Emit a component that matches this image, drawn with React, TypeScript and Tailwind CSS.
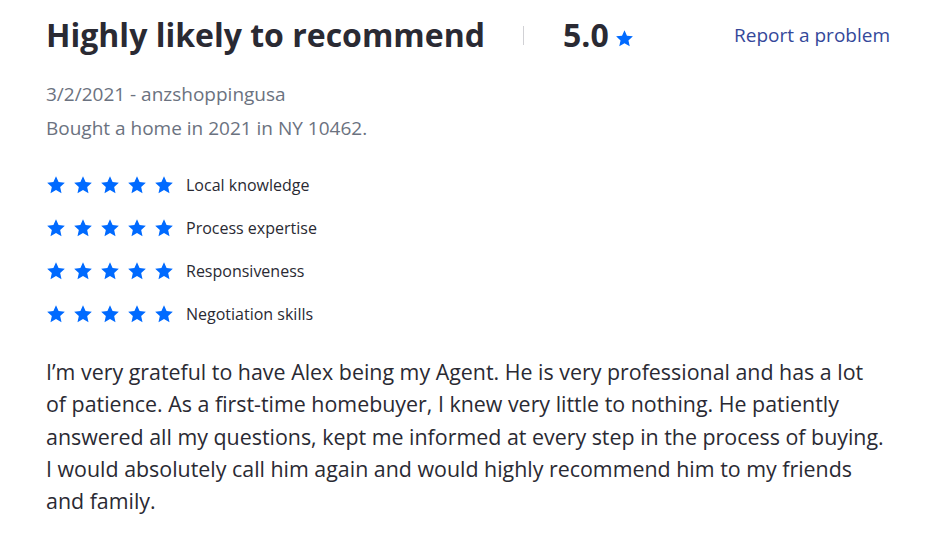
const categories = ['Local knowledge', 'Process expertise', 'Responsiveness', 'Negotiation skills'];

function Star({ className }: { className: string }) {
  return (
    <svg viewBox="0 0 24 24" className={className} aria-hidden="true">
      <path
        fill="#006aff"
        d="M12 1.6l3.1 6.9 7.5.8-5.6 5.1 1.6 7.4L12 18l-6.6 3.8L7 14.4 1.4 9.3l7.5-.8z"
      />
    </svg>
  );
}

export default function App() {
  return (
    <div className="min-h-screen bg-white font-['Open_Sans',sans-serif] text-[#2a2a33]">
      <div className="pl-[46px] pr-[52px] pt-[13px]">
        {/* Header */}
        <div className="flex items-start justify-between">
          <div className="flex items-center">
            <h2 className="text-[32px] font-bold leading-[44px] text-[#2a2a33]">Highly likely to recommend</h2>
            <span className="ml-[38px] h-[19px] w-px bg-[#d1d1d5]" />
            <div className="ml-[39px] flex items-end">
              <span className="text-[32px] font-bold leading-[44px]">5.0</span>
              <Star className="mb-[9px] ml-[6px] h-[19px] w-[19px]" />
            </div>
          </div>
          <a href="#" className="mt-[8px] text-[19px] leading-[28px] text-[#34489a]">
            Report a problem
          </a>
        </div>

        {/* Meta */}
        <div className="mt-[20px] text-[19px] leading-[34px] text-[#6b7280]">
          <p>3/2/2021 - anzshoppingusa</p>
          <p>Bought a home in 2021 in NY 10462.</p>
        </div>

        {/* Sub ratings */}
        <ul className="mt-[28px] flex flex-col gap-[19px]">
          {categories.map((c) => (
            <li key={c} className="flex items-center">
              <div className="flex gap-[7px]">
                {[0, 1, 2, 3, 4].map((i) => (
                  <Star key={i} className="h-[20px] w-[20px]" />
                ))}
              </div>
              <span className="ml-[12px] text-[16px] leading-[24px] text-[#2a2a33]">{c}</span>
            </li>
          ))}
        </ul>

        {/* Review body */}
        <p className="mt-[30px] max-w-[840px] text-[21.4px] leading-[32.3px] text-[#2a2a33]">
          I’m very grateful to have Alex being my Agent. He is very professional and has a lot of patience. As a
          first-time homebuyer, I knew very little to nothing. He patiently answered all my questions, kept me
          informed at every step in the process of buying. I would absolutely call him again and would highly
          recommend him to my friends and family.
        </p>
      </div>
    </div>
  );
}
